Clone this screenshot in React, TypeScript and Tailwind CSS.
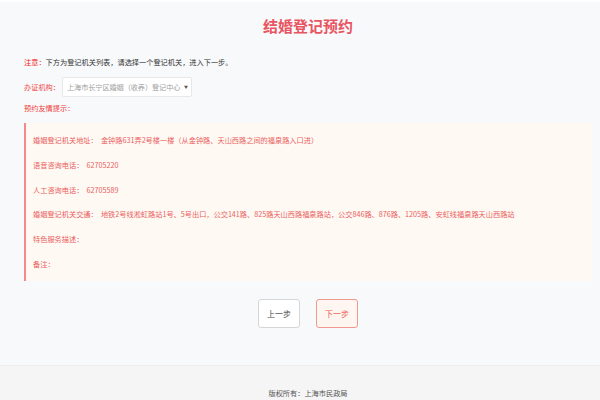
const cjk = "font-['Noto_Sans_CJK_SC','Noto_Sans',sans-serif]";

const tips = [
  "婚姻登记机关地址：  金钟路631弄2号楼一楼（从金钟路、天山西路之间的福泉路入口进）",
  "语音咨询电话：  62705220",
  "人工咨询电话：  62705589",
  "婚姻登记机关交通：  地铁2号线淞虹路站1号、5号出口，公交141路、825路天山西路福泉路站，公交846路、876路、1205路、安虹线福泉路天山西路站",
  "特色服务描述：",
  "备注：",
];

export default function App() {
  return (
    <div className={`flex h-[400px] w-[600px] flex-col overflow-hidden bg-[#f8f9fb] ${cjk}`}>
      <header className="flex h-[50px] items-center justify-center border-t-2 border-white pl-[16px]">
        <h1 className="text-[15px] font-bold text-[#e85562]">结婚登记预约</h1>
      </header>

      <div className="pl-[24px] pr-[8px]">
        <p className="mt-[6px] text-[7.2px] leading-[12px] text-[#333]">
          <span className="text-[#f02020]">注意：</span>
          下方为登记机关列表，请选择一个登记机关，进入下一步。
        </p>

        <div className="mt-[9px] flex items-center">
          <span className="text-[7.2px] text-[#f04848]">办证机构：</span>
          <div className="ml-[2px] flex h-[20px] w-[130px] items-center justify-between whitespace-nowrap rounded-[2px] border border-[#e8e8e8] bg-white pl-[4px] pr-[3px] text-[7.2px] text-[#a0a0a0]">
            <span className="tracking-[-0.1px]">上海市长宁区婚姻（收养）登记中心</span>
            <span className="text-[4px] text-[#555]">▼</span>
          </div>
        </div>

        <p className="mt-[5px] text-[7.2px] leading-[12px] text-[#f03a3a]">预约友情提示：</p>

        <div className="mt-[9px] flex h-[158px] flex-col gap-[12.8px] border-l-2 border-[#f28a8a] bg-[#fff9f4] pt-[11px] pb-[11px] pl-[7px]">
          {tips.map((t) => (
            <p key={t} className="whitespace-pre text-[7.2px] leading-[12px] text-[#e9605c]">
              {t}
            </p>
          ))}
        </div>
      </div>

      <div className="mt-[18px] flex justify-center gap-[16px] pl-[16px]">
        <button className="h-[29px] w-[42px] rounded-[3px] border border-[#d6d6d6] bg-white text-[8px] text-[#444]">
          上一步
        </button>
        <button className="h-[29px] w-[42px] rounded-[3px] border border-[#ee9a92] bg-[#fff6f1] text-[8px] text-[#e8584e]">
          下一步
        </button>
      </div>

      <footer className="mt-auto h-[35px] border-t border-[#eeeeee] bg-[#f5f5f5] pl-[16px] pt-[21px] text-center text-[7.2px] leading-[12px] text-[#555]">
        版权所有：上海市民政局
      </footer>
    </div>
  );
}
